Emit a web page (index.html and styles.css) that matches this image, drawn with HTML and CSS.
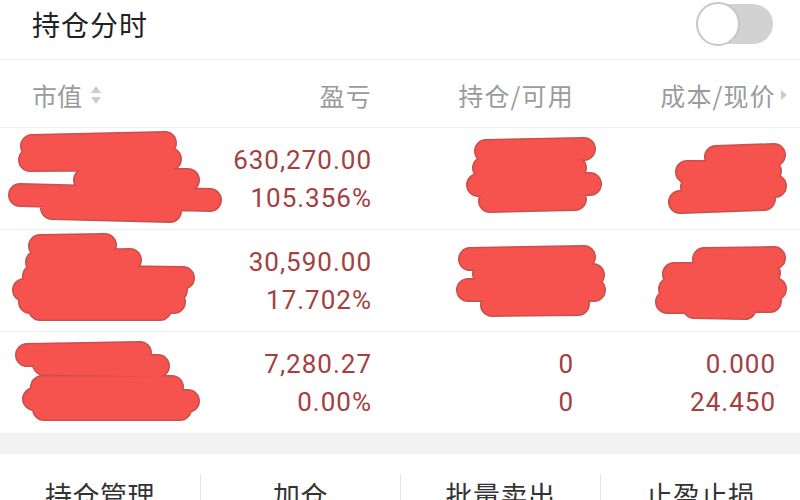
FILE: index.html
```html
<!DOCTYPE html>
<html lang="zh-CN">
<head>
<meta charset="utf-8">
<title>持仓分时</title>
<link rel="stylesheet" href="styles.css">
</head>
<body>
<div class="page">
  <header class="titlebar">
    <h1 class="title">持仓分时</h1>
    <span class="switch"><span class="knob"></span></span>
  </header>

  <div class="grid thead">
    <div class="cell c1">市值<svg class="sort" viewBox="0 0 12 22" width="12" height="22"><path d="M6 2 L11 9 L1 9 Z"/><path d="M6 20 L11 13 L1 13 Z"/></svg></div>
    <div class="cell c2">盈亏</div>
    <div class="cell c3">持仓/可用</div>
    <div class="cell c4">成本/现价<svg class="caret" viewBox="0 0 8 12" width="8" height="12"><path d="M1 1 L7 6 L1 11 Z"/></svg></div>
  </div>

  <div class="grid row">
    <div class="cell c1"></div>
    <div class="cell c2 num"><span>630,270.00</span><span>105.356%</span></div>
    <div class="cell c3 num"><span>0</span><span>0</span></div>
    <div class="cell c4 num"><span>0.000</span><span>0.000</span></div>
    <svg class="redact" viewBox="0 0 800 102" width="800" height="102">
      <defs>
        <g id="r1">
          <path d="M32 18 L165 15 M30 32 L170 31 M85 52 L188 52 M20 67 L210 72 M52 80 L170 83"/>
          <path d="M486 23 L584 21 M484 40 L575 40 M478 57 L590 56 M490 73 L575 71"/>
          <path d="M716 29 L774 27 M687 44 L770 43 M692 59 L775 58 M680 74 L764 71"/>
        </g>
      </defs>
      <use href="#r1" class="edge"/>
      <use href="#r1" class="ink"/>
    </svg>
  </div>

  <div class="grid row">
    <div class="cell c1"></div>
    <div class="cell c2 num"><span>30,590.00</span><span>17.702%</span></div>
    <div class="cell c3 num"><span>0</span><span>0</span></div>
    <div class="cell c4 num"><span>0.000</span><span>0.000</span></div>
    <svg class="redact" viewBox="0 0 800 102" width="800" height="102">
      <defs>
        <g id="r2">
          <path d="M40 16 L105 15 M37 32 L130 30 M34 46 L183 48 M24 60 L176 60 M30 72 L174 72 M40 79 L160 79"/>
          <path d="M470 29 L584 27 M484 44 L593 45 M468 60 L594 60 M492 75 L578 74"/>
          <path d="M704 29 L774 28 M674 44 L769 43 M670 59 L775 59 M667 72 L770 71 M694 77 L745 78"/>
        </g>
      </defs>
      <use href="#r2" class="edge"/>
      <use href="#r2" class="ink"/>
    </svg>
  </div>

  <div class="grid row">
    <div class="cell c1"></div>
    <div class="cell c2 num"><span>7,280.27</span><span>0.00%</span></div>
    <div class="cell c3 num"><span>0</span><span>0</span></div>
    <div class="cell c4 num"><span>0.000</span><span>24.450</span></div>
    <svg class="redact" viewBox="0 0 800 102" width="800" height="102">
      <defs>
        <g id="r3">
          <path d="M27 23 L140 21 M44 32 L158 34 M42 55 L172 55 M34 67 L188 69 M44 77 L180 77"/>
        </g>
      </defs>
      <use href="#r3" class="edge"/>
      <use href="#r3" class="ink"/>
    </svg>
  </div>

  <div class="band"></div>

  <nav class="actions">
    <a class="action">持仓管理</a>
    <a class="action">加仓</a>
    <a class="action">批量卖出</a>
    <a class="action">止盈止损</a>
  </nav>
</div>
</body>
</html>
```

FILE: styles.css
```css
* { box-sizing: border-box; }
html, body {
  margin: 0;
  padding: 0;
  background: #ffffff;
}
body {
  font-family: "Noto Sans CJK SC", "Roboto", sans-serif;
  color: #222;
}
.page {
  width: 800px;
  height: 500px;
  overflow: hidden;
  background: #fff;
}

/* title bar */
.titlebar {
  height: 60px;
  display: flex;
  align-items: center;
  justify-content: space-between;
  padding: 0 27px 12px 32px;
  border-bottom: 1px solid #eeeeee;
}
.title {
  margin: 0;
  font-size: 28px;
  font-weight: 400;
  color: #222;
  line-height: 34px;
  letter-spacing: 1px;
}
.switch {
  position: relative;
  width: 76px;
  height: 40px;
  border-radius: 20px;
  background: #d2d2d2;
}
.knob {
  position: absolute;
  left: -1px;
  top: -2px;
  width: 44px;
  height: 44px;
  border-radius: 50%;
  background: #fff;
  border: 2px solid #c6c6c6;
}

/* table grid */
.grid {
  display: grid;
  grid-template-columns: 170px 170px 202px 202px;
  padding-left: 32px;
  position: relative;
}
.cell { text-align: right; }
.cell.c1 { text-align: left; }

.thead {
  height: 68px;
  align-items: center;
  padding-top: 2px;
  font-size: 25px;
  color: #9b9b9b;
  letter-spacing: 1.2px;
  border-bottom: 1px solid #efefef;
}
.thead .cell { display: flex; align-items: center; justify-content: flex-end; }
.thead .c1 { justify-content: flex-start; letter-spacing: 0; }
.sort {
  margin-left: 8px;
  fill: #cccccc;
}
.caret {
  margin-left: 4px;
  margin-right: -12px;
  fill: #cccccc;
}

.row {
  height: 102px;
  align-items: center;
  border-bottom: 1px solid #f0f0f0;
}
.num {
  display: flex;
  flex-direction: column;
  align-items: flex-end;
  font-family: "Roboto", "Noto Sans CJK SC", sans-serif;
  font-size: 26px;
  line-height: 38px;
  letter-spacing: 1px;
  color: #a3403f;
}

/* redaction scribbles laid over the row */
.redact {
  position: absolute;
  left: 0;
  top: 0;
  fill: none;
  stroke-linecap: round;
  stroke-linejoin: round;
  pointer-events: none;
}
.redact .edge {
  stroke: #c9504c;
  stroke-width: 24px;
}
.redact .ink {
  stroke: #f6534f;
  stroke-width: 21px;
}

.band {
  height: 20px;
  background: #f2f2f2;
}

/* bottom actions */
.actions {
  display: grid;
  grid-template-columns: repeat(4, 1fr);
  height: 82px;
  align-items: center;
}
.action {
  height: 42px;
  line-height: 42px;
  text-align: center;
  font-size: 27px;
  color: #333;
  border-left: 1px solid #e6e6e6;
  letter-spacing: 0.5px;
}
.action:first-child { border-left: none; }
```
